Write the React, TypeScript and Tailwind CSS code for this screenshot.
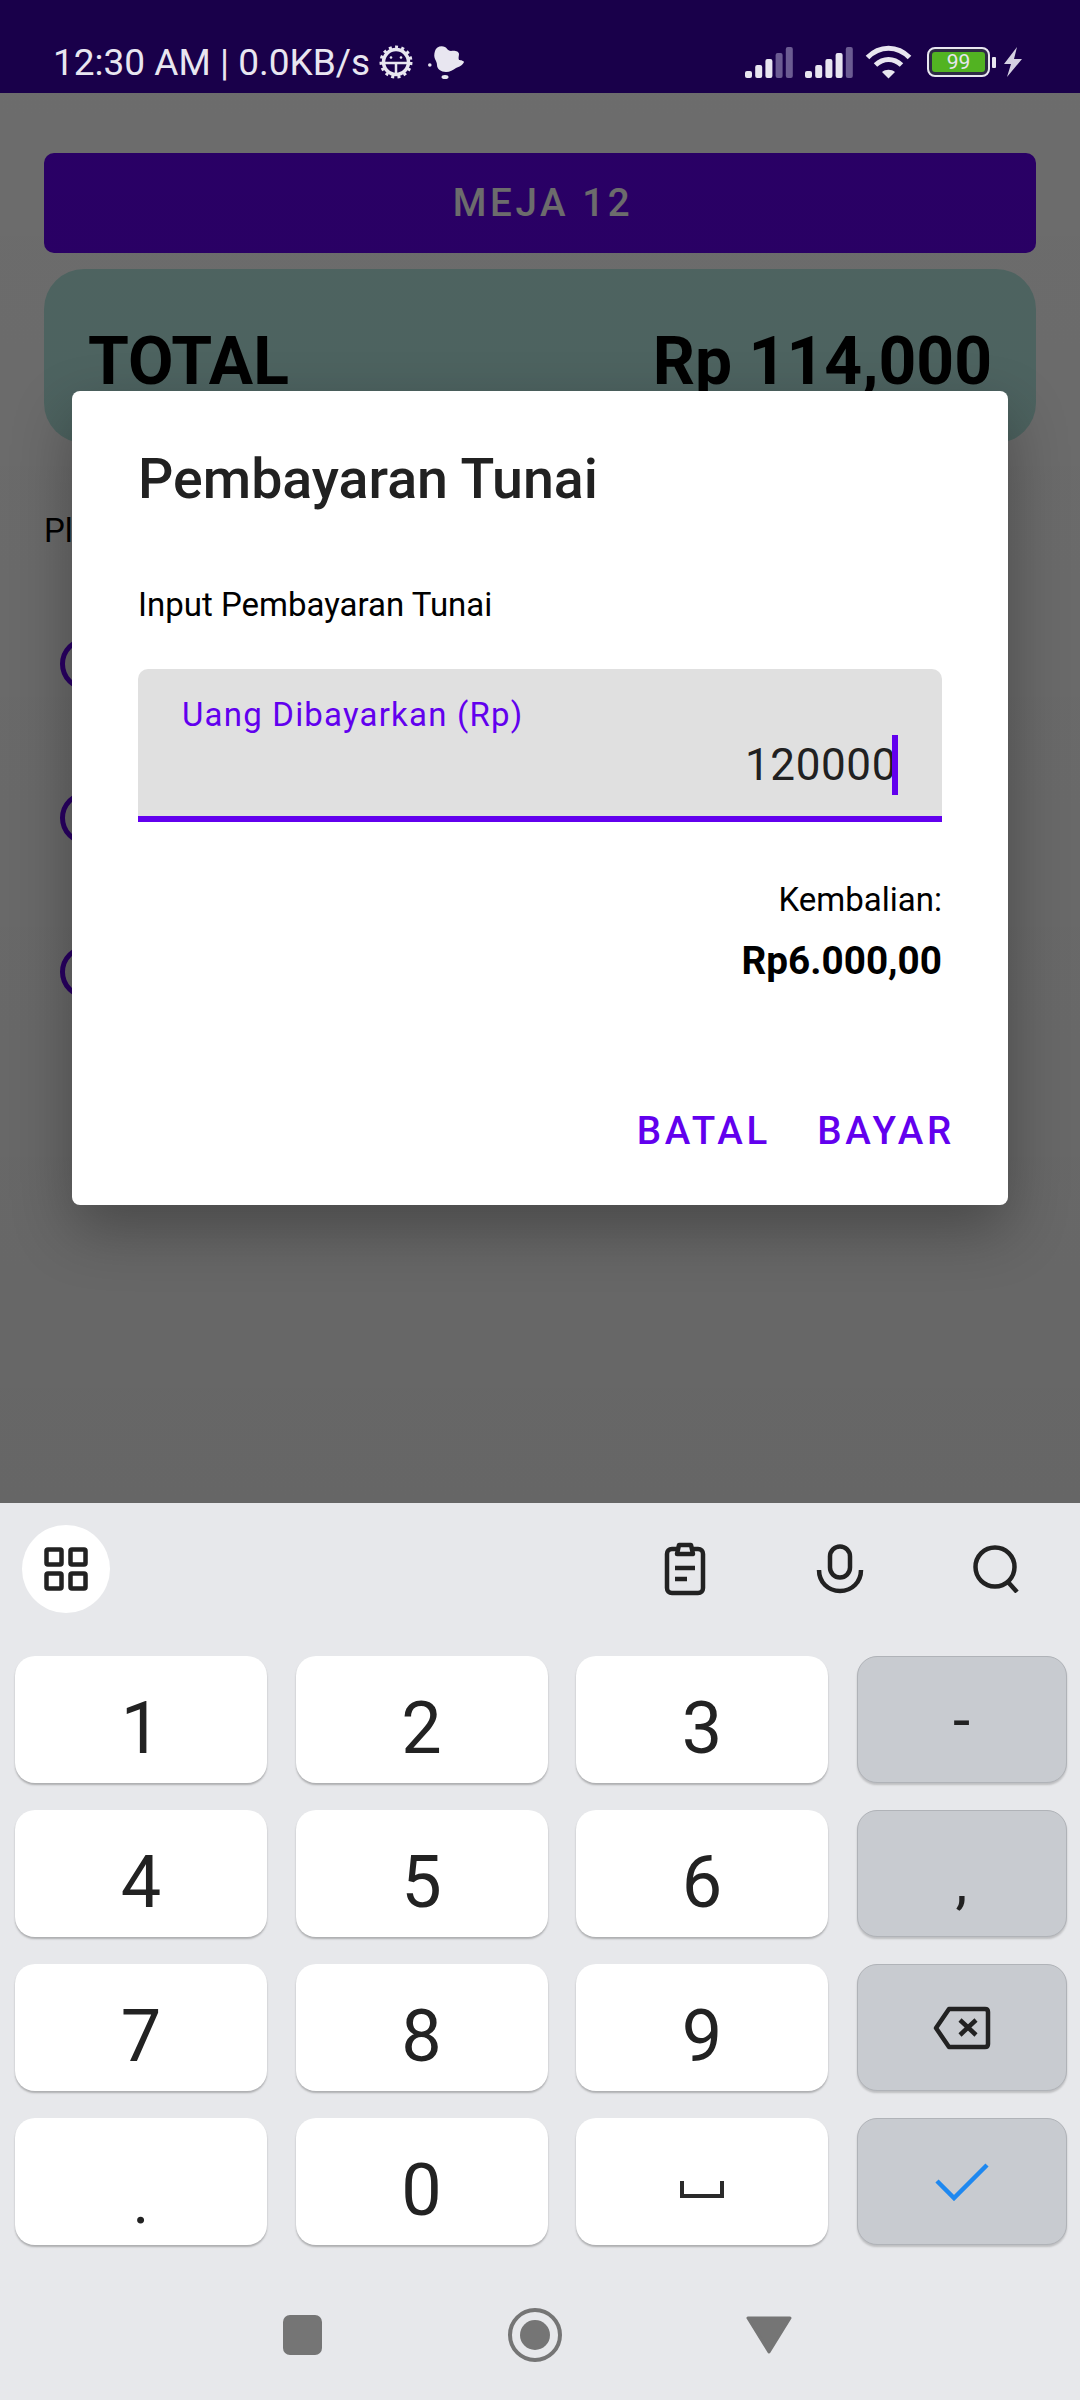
const roboto = "font-['Roboto',sans-serif]"

const keys = ['1', '2', '3', '-', '4', '5', '6', ',', '7', '8', '9', 'back', '.', '0', 'space', 'done']

const Signal = ({ dim }: { dim: number }) => (
  <svg width="48" height="32" viewBox="0 0 48 32">
    {[0, 1, 2, 3, 4].map((i) => (
      <rect
        key={i}
        x={i * 10.2}
        y={25 - i * 6}
        width="7"
        height={7 + i * 6}
        rx="2"
        fill={i >= 5 - dim ? '#6b5b92' : '#e8e6f0'}
      />
    ))}
  </svg>
)

const StatusBar = () => (
  <div className="flex h-[93px] shrink-0 items-center bg-[#19004a] pt-[31px] text-[#e8e6f0]">
    <span className={`${roboto} ml-[53px] w-[326px] whitespace-nowrap text-[37px] leading-none`}>12:30 AM | 0.0KB/s</span>
    <svg width="34" height="34" viewBox="0 0 34 34" fill="none" stroke="#e8e6f0">
      <circle cx="17" cy="17" r="12.5" strokeWidth="3.5" />
      <circle cx="17" cy="17" r="15" strokeWidth="3" strokeDasharray="3 3.3" />
      <path d="M6 18h22M17 18v10" strokeWidth="2.5" />
      <circle cx="12" cy="12.5" r="1.3" fill="#e8e6f0" stroke="none" />
      <circle cx="22" cy="12.5" r="1.3" fill="#e8e6f0" stroke="none" />
    </svg>
    <svg className="ml-[15px]" width="36" height="34" viewBox="0 0 36 34" fill="#e8e6f0">
      <path d="M7 6c1-4 6-6 10-4 2 1 3 4 6 4 3-1 8 0 8 3 0 2-1 4 0 6 2 0 5 1 5 2-1 3-5 5-8 6-3 2-6 4-10 4-5 0-9-3-9-7 0-2-1-4-2-6S6 9 7 6z" />
      <circle cx="1.800" cy="20" r="1.800" />
      <ellipse cx="17" cy="32" rx="3.500" ry="2" />
    </svg>
    <div className="ml-auto flex items-center">
      <Signal dim={2} />
      <div className="ml-[12px]">
        <Signal dim={1} />
      </div>
      <svg className="ml-[12px]" width="47" height="34" viewBox="0 0 47 34" fill="none" stroke="#e8e6f0" strokeWidth="5">
        <path d="M2.5 12.5c12-12.5 30-12.5 42 0" />
        <path d="M10.5 20c8-7.500 18-7.500 26 0" />
        <path d="M23.500 33.500l-6.500-6.500c3.500-3 9.500-3 13 0z" fill="#e8e6f0" stroke="none" />
      </svg>
      <div className="ml-[15px] flex h-[30px] w-[63px] rounded-[8px] border-[2.5px] border-[#e8e6f0] bg-[#2e2a45] p-[3px]">
        <div className={`${roboto} flex flex-1 items-center justify-center rounded-[3px] bg-[#52b322] text-[21px] leading-none text-[#e8e6f0]`}>99</div>
      </div>
      <div className="ml-[2px] h-[11px] w-[4px] rounded-[1px] bg-[#e8e6f0]" />
      <svg className="ml-[7px] mr-[58px]" width="19" height="30" viewBox="0 0 19 30" fill="#d5d1e2">
        <path d="M14 0 1 17h7L4 30l15-18h-8z" />
      </svg>
    </div>
  </div>
)

const PageBehind = () => (
  <div className={`${roboto} relative h-[1410px] shrink-0 bg-white px-[44px] pt-[60px]`}>
    <div className="flex h-[100px] items-center justify-center rounded-[10px] bg-[#6200ee] pl-[6px] text-[38.500px] font-medium tracking-[3.600px] text-white">MEJA 12</div>
    <div className="mt-[16px] flex h-[174px] items-start justify-between rounded-[40px] bg-[#b8ebe4] px-[44px] pt-[53px] text-[66px] font-bold leading-[80px] text-black">
      <span>TOTAL</span>
      <span>Rp 114,000</span>
    </div>
    <div className="mt-[65px] text-[33px] leading-[46px] text-black">Please Select Payment</div>
    <div className="mt-[83px] flex flex-col gap-[100px] pl-[16px]">
      {[0, 1, 2].map((i) => (
        <div key={i} className="h-[54px] w-[54px] rounded-full border-[5px] border-[#6200ee]" />
      ))}
    </div>
    <div className="absolute inset-0 bg-linear-to-b from-black/[.576] to-black/[.6]" />
  </div>
)

const PayDialog = () => (
  <div className={`${roboto} absolute left-[72px] top-[391px] h-[814px] w-[936px] rounded-[8px] bg-white px-[66px] pt-[56px] shadow-[0_24px_60px_rgba(0,0,0,0.3)]`}>
    <h2 className="text-[55.500px] font-medium leading-[66px] text-[#212121]">Pembayaran Tunai</h2>
    <p className="mt-[70px] text-[33px] leading-[44px] text-black">Input Pembayaran Tunai</p>
    <div className="mt-[42px] h-[153px] rounded-t-[10px] border-b-[6px] border-[#6200ee] bg-[#e0e0e0] pl-[44px] pr-[44px] pt-[26px]">
      <div className="text-[33px] leading-[40px] tracking-[1.2px] text-[#6200ee]">Uang Dibayarkan (Rp)</div>
      <div className="flex items-center justify-end text-[44px] leading-[60px] tracking-[0.6px] text-[#212121]">
        120000
        <span className="ml-[-5px] h-[60px] w-[6px] bg-[#6200ee]" />
      </div>
    </div>
    <div className="mt-[56px] text-right text-[33px] leading-[44px] text-black">Kembalian:</div>
    <div className="mt-[17px] text-right text-[38.700px] font-bold leading-[44px] text-black">Rp6.000,00</div>
    <div className="mr-[-13px] mt-[126px] flex justify-end gap-[46px] text-[38.500px] font-medium leading-[44px] tracking-[3.800px] text-[#6200ee]">
      <span>BATAL</span>
      <span>BAYAR</span>
    </div>
  </div>
)

const BackspaceIcon = () => (
  <svg width="58" height="44" viewBox="0 0 58 44" fill="none" stroke="#222" strokeWidth="4.5" strokeLinejoin="round">
    <path d="M16 3h36c2 0 3 1 3 3v32c0 2-1 3-3 3H16L3 22z" />
    <path d="M27 14l16 15M43 14 27 29" />
  </svg>
)

const KeyFace = ({ k }: { k: string }) => {
  if (k === 'back') return <BackspaceIcon />
  if (k === 'done') {
    return (
      <svg width="54" height="38" viewBox="0 0 54 38" fill="none" stroke="#1e88f0" strokeWidth="4.500">
        <path d="M2 18l17 17L52 2" />
      </svg>
    )
  }
  if (k === 'space') {
    return (
      <svg className="mt-[16px]" width="44" height="18" viewBox="0 0 44 18" fill="none" stroke="#2a2a2a" strokeWidth="4">
        <path d="M2 0v15h40V0" />
      </svg>
    )
  }
  if (k === '-') return <span className="text-[62px] leading-none">-</span>
  if (k === ',') return <span className="mt-[16px] text-[60px] leading-none">,</span>
  if (k === '.') return <span className="mt-[40px] text-[62px] leading-none">.</span>
  return <span className="mt-[18px] text-[72px] leading-none">{k}</span>
}

const Keyboard = () => (
  <div className="flex flex-1 flex-col bg-[#e7e8eb]">
    <div className="flex h-[153px] shrink-0 items-center pb-[21px] pl-[22px] pr-[53px]">
      <div className="flex h-[88px] w-[88px] items-center justify-center rounded-full bg-white">
        <svg width="44" height="44" viewBox="0 0 44 44" fill="none" stroke="#222" strokeWidth="4.5" strokeLinejoin="round">
          <rect x="2.500" y="2.500" width="15" height="15" rx="1.500" />
          <rect x="26.500" y="2.500" width="15" height="15" rx="1.500" />
          <rect x="2.500" y="26.500" width="15" height="15" rx="1.500" />
          <rect x="26.500" y="26.500" width="15" height="15" rx="1.500" />
        </svg>
      </div>
      <div className="ml-auto flex items-center gap-[96px]">
        <svg width="60" height="54" viewBox="0 0 60 54" fill="none" stroke="#222" strokeWidth="4.500" strokeLinejoin="round">
          <path d="M23 7h-6c-3 0-5 2-5 5v34c0 3 2 5 5 5h26c3 0 5-2 5-5V12c0-3-2-5-5-5h-6" />
          <path d="M22 12l2-9h12l2 9z" />
          <path d="M20 26h20M20 37h12" />
        </svg>
        <svg width="60" height="50" viewBox="0 0 60 50" fill="none" stroke="#222" strokeWidth="4.500">
          <rect x="19" y="2.500" width="20" height="31" rx="10" />
          <path d="M8 26c0 12 9 21 21 21s21-9 21-21" />
        </svg>
        <svg width="60" height="48" viewBox="0 0 60 48" fill="none" stroke="#222" strokeWidth="4.500">
          <circle cx="28" cy="22" r="19.500" />
          <path d="M41 37l9 10" />
        </svg>
      </div>
    </div>
    <div className={`${roboto} grid grid-cols-[252px_252px_252px_210px] gap-x-[28.5px] gap-y-[27px] px-[15px] text-[#222]`}>
      {keys.map((k, i) => (
        <div
          key={k}
          className={
            (i + 1) % 4 === 0
              ? 'flex h-[127px] items-center justify-center rounded-[20px] border border-[#b0b3b8] bg-[#c8cbd0] shadow-[0_2px_2px_rgba(0,0,0,0.18)]'
              : 'flex h-[127px] items-center justify-center rounded-[20px] bg-white shadow-[0_2px_2px_rgba(0,0,0,0.25)]'
          }
        >
          <KeyFace k={k} />
        </div>
      ))}
    </div>
    <div className="flex flex-1 items-center justify-center pr-[5px] pt-[24px]">
      <div className="h-[40px] w-[39px] rounded-[7px] bg-[#757575]" />
      <div className="ml-[186px] flex h-[54px] w-[54px] items-center justify-center rounded-full border-[4px] border-[#757575]">
        <div className="h-[30px] w-[30px] rounded-full bg-[#757575]" />
      </div>
      <svg className="ml-[184px]" width="46" height="38" viewBox="0 0 46 38" fill="#757575" stroke="#757575" strokeWidth="3" strokeLinejoin="round">
        <path d="M2 2h42L23 36z" />
      </svg>
    </div>
  </div>
)

export default function App() {
  return (
    <div className="relative flex h-[2400px] w-[1080px] flex-col overflow-hidden bg-[#e7e8eb]">
      <StatusBar />
      <PageBehind />
      <PayDialog />
      <Keyboard />
    </div>
  )
}
